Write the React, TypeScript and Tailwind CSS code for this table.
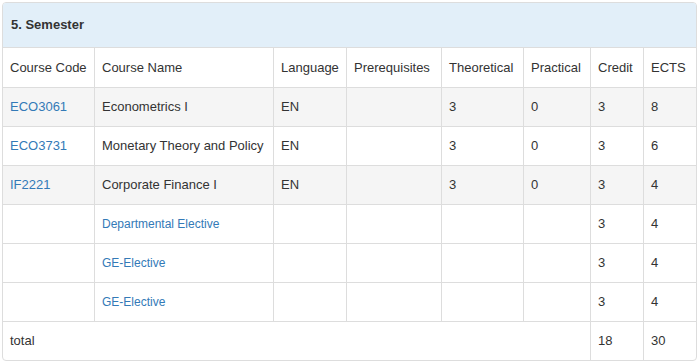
import React from "react";

type Row = {
  code?: string;
  name: string;
  nameLink?: boolean;
  lang?: string;
  pre?: string;
  th?: string;
  pr?: string;
  credit: string;
  ects: string;
  grey?: boolean;
};

const rows: Row[] = [
  { code: "ECO3061", name: "Econometrics I", lang: "EN", th: "3", pr: "0", credit: "3", ects: "8", grey: true },
  { code: "ECO3731", name: "Monetary Theory and Policy", lang: "EN", th: "3", pr: "0", credit: "3", ects: "6" },
  { code: "IF2221", name: "Corporate Finance I", lang: "EN", th: "3", pr: "0", credit: "3", ects: "4", grey: true },
  { name: "Departmental Elective", nameLink: true, credit: "3", ects: "4" },
  { name: "GE-Elective", nameLink: true, credit: "3", ects: "4" },
  { name: "GE-Elective", nameLink: true, credit: "3", ects: "4" },
];

const cell = "flex items-center px-[7px] border-r border-b border-[#dddddd] h-[39px]";
const last = "flex items-center px-[7px] border-b border-[#dddddd] h-[39px]";

export default function App() {
  return (
    <div className="w-[700px] h-[363px] bg-white pt-[2px] pl-[2px]" style={{ fontFamily: '"Liberation Sans", Arial, sans-serif' }}>
      <div className="w-[695px] border border-[#dddddd] rounded-[4px] overflow-hidden text-[13px] text-[#333333]">
        <div className="h-[45px] bg-[#e2eff9] border-b border-[#dddddd] flex items-center pl-[8px] font-bold">
          5. Semester
        </div>
        <div className="grid grid-cols-[92px_179px_73px_95px_82px_67px_53px_52px]">
          <div className={cell + " h-[40px]"}>Course Code</div>
          <div className={cell + " h-[40px]"}>Course Name</div>
          <div className={cell + " h-[40px]"}>Language</div>
          <div className={cell + " h-[40px]"}>Prerequisites</div>
          <div className={cell + " h-[40px]"}>Theoretical</div>
          <div className={cell + " h-[40px]"}>Practical</div>
          <div className={cell + " h-[40px]"}>Credit</div>
          <div className={last + " h-[40px]"}>ECTS</div>
          {rows.map((r, i) => {
            const bg = r.grey ? " bg-[#f5f5f5]" : " bg-white";
            return (
              <React.Fragment key={i}>
                <div className={cell + bg}>
                  {r.code && <span className="text-[#337ab7]">{r.code}</span>}
                </div>
                <div className={cell + bg}>
                  <span className={r.nameLink ? "text-[#337ab7] text-[12px]" : ""}>{r.name}</span>
                </div>
                <div className={cell + bg}>{r.lang}</div>
                <div className={cell + bg}>{r.pre}</div>
                <div className={cell + bg}>{r.th}</div>
                <div className={cell + bg}>{r.pr}</div>
                <div className={cell + bg}>{r.credit}</div>
                <div className={last + bg}>{r.ects}</div>
              </React.Fragment>
            );
          })}
          <div className="col-span-6 flex items-center px-[7px] border-r border-[#dddddd] h-[38px]">total</div>
          <div className="flex items-center px-[7px] border-r border-[#dddddd] h-[38px]">18</div>
          <div className="flex items-center px-[7px] h-[38px]">30</div>
        </div>
      </div>
    </div>
  );
}
